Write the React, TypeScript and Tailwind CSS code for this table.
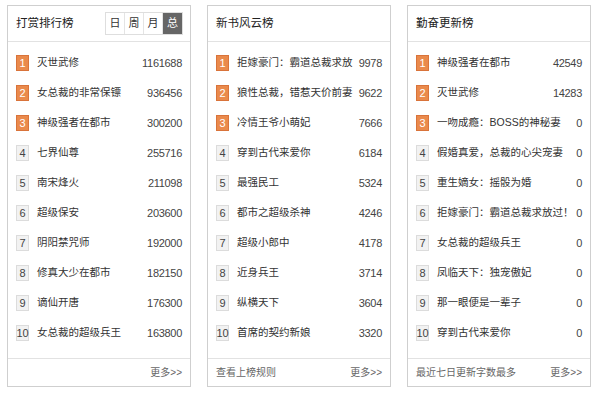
import React from 'react';

type Item = { name: string; value: string };

const rewardList: Item[] = [
  { name: '灭世武修', value: '1161688' },
  { name: '女总裁的非常保镖', value: '936456' },
  { name: '神级强者在都市', value: '300200' },
  { name: '七界仙尊', value: '255716' },
  { name: '南宋烽火', value: '211098' },
  { name: '超级保安', value: '203600' },
  { name: '阴阳禁咒师', value: '192000' },
  { name: '修真大少在都市', value: '182150' },
  { name: '谪仙开唐', value: '176300' },
  { name: '女总裁的超级兵王', value: '163800' },
];

const newBookList: Item[] = [
  { name: '拒嫁豪门：霸道总裁求放', value: '9978' },
  { name: '狼性总裁，错惹天价前妻', value: '9622' },
  { name: '冷情王爷小萌妃', value: '7666' },
  { name: '穿到古代来爱你', value: '6184' },
  { name: '最强民工', value: '5324' },
  { name: '都市之超级杀神', value: '4246' },
  { name: '超级小郎中', value: '4178' },
  { name: '近身兵王', value: '3714' },
  { name: '纵横天下', value: '3604' },
  { name: '首席的契约新娘', value: '3320' },
];

const updateList: Item[] = [
  { name: '神级强者在都市', value: '42549' },
  { name: '灭世武修', value: '14283' },
  { name: '一吻成瘾：BOSS的神秘妻', value: '0' },
  { name: '假婚真爱，总裁的心尖宠妻', value: '0' },
  { name: '重生嫡女：摇骰为婚', value: '0' },
  { name: '拒嫁豪门：霸道总裁求放过！', value: '0' },
  { name: '女总裁的超级兵王', value: '0' },
  { name: '凤临天下：独宠傲妃', value: '0' },
  { name: '那一眼便是一辈子', value: '0' },
  { name: '穿到古代来爱你', value: '0' },
];

const tabs = ['日', '周', '月', '总'];

function RankList({ items }: { items: Item[] }) {
  return (
    <ul className="pt-[6px] pb-[10px] px-[8px]">
      {items.map((item, i) => {
        const top = i < 3;
        return (
          <li key={i} className="h-[30px] flex items-center">
            <span
              className={`w-[13px] h-[16px] shrink-0 flex items-center justify-center text-[11px] leading-none ${
                top
                  ? 'bg-[#ea8a4c] border border-[#d9733a] text-white'
                  : 'bg-[#f2f2f2] border border-[#dcdcdc] text-[#444]'
              }`}
            >
              {i + 1}
            </span>
            <span className="ml-[8px] flex-1 min-w-0 whitespace-nowrap text-[10.5px] text-[#333]">
              {item.name}
            </span>
            <span className="ml-[2px] text-[11px] tracking-[-0.3px] text-[#444]">{item.value}</span>
          </li>
        );
      })}
    </ul>
  );
}

function Panel({
  title,
  items,
  note,
  withTabs,
}: {
  title: string;
  items: Item[];
  note?: string;
  withTabs?: boolean;
}) {
  return (
    <div className="w-[184px] border border-[#cfcfcf] bg-white flex flex-col">
      <div className="h-[36px] border-b border-[#e2e2e2] flex items-center justify-between pl-[8px] pr-[7px]">
        <h2 className="text-[11.5px] text-[#222]">{title}</h2>
        {withTabs && (
          <div className="flex border border-[#dedede]">
            {tabs.map((t, i) => (
              <span
                key={t}
                className={`w-[19px] h-[21px] flex items-center justify-center text-[11px] ${
                  i === tabs.length - 1
                    ? 'bg-[#666] text-white'
                    : 'bg-white text-[#333] border-r border-[#e4e4e4]'
                }`}
              >
                {t}
              </span>
            ))}
          </div>
        )}
      </div>
      <RankList items={items} />
      <div className="h-[28px] border-t border-[#e2e2e2] flex items-center justify-between px-[8px] text-[10px] text-[#666]">
        <span>{note ?? ''}</span>
        <span>更多&gt;&gt;</span>
      </div>
    </div>
  );
}

export default function App() {
  return (
    <div
      className="w-[600px] h-[400px] bg-white pt-[5px] pl-[7px] flex gap-[16px] items-start"
      style={{ fontFamily: '"Liberation Sans", "Noto Sans CJK SC", sans-serif' }}
    >
      <Panel title="打赏排行榜" items={rewardList} withTabs />
      <Panel title="新书风云榜" items={newBookList} note="查看上榜规则" />
      <Panel title="勤奋更新榜" items={updateList} note="最近七日更新字数最多" />
    </div>
  );
}
